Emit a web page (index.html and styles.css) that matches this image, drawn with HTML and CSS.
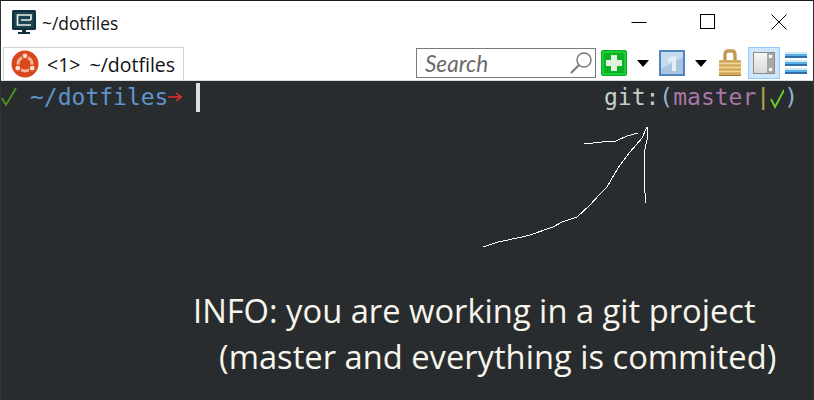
FILE: index.html
```html
<!DOCTYPE html>
<html lang="en">
<head>
<meta charset="utf-8">
<title>~/dotfiles</title>
<link rel="stylesheet" href="styles.css">
</head>
<body>
<div class="window">
  <header class="titlebar">
    <svg class="app-icon" width="24" height="24" viewBox="0 0 24 24">
      <rect x="0" y="0" width="24" height="20" rx="1.5" fill="#12303c"/>
      <rect x="2" y="2" width="20" height="16" fill="#1b4250"/>
      <path d="M19 10V5H5.500V15H19M9 10H19" fill="none" stroke="#e6efe9" stroke-width="1.700"/>
      <rect x="10" y="20" width="4" height="2" fill="#12303c"/>
      <rect x="6" y="22" width="12" height="2" fill="#12303c"/>
    </svg>
    <span class="title">~/dotfiles</span>
    <div class="caption">
      <svg class="caption-btn" width="16" height="16" viewBox="0 0 16 16"><path d="M0.5 8.500H15.500" stroke="#000" fill="none"/></svg>
      <svg class="caption-btn" width="16" height="16" viewBox="0 0 16 16"><rect x="0.500" y="0.500" width="14" height="14" stroke="#000" fill="none"/></svg>
      <svg class="caption-btn caption-close" width="16" height="16" viewBox="0 0 16 16"><path d="M0.500 0.500L15.500 15.500M15.500 0.500L0.500 15.500" stroke="#000" fill="none"/></svg>
    </div>
  </header>
  <nav class="toolbar">
    <div class="tab">
      <svg class="ubuntu" width="28" height="28" viewBox="0 0 28 28">
        <circle cx="14" cy="14" r="13.500" fill="#d9481c"/>
        <circle cx="14" cy="14" r="7" fill="none" stroke="#f3b79c" stroke-width="3"/>
        <circle cx="14" cy="5.800" r="3" fill="#f9dccd" stroke="#d9481c" stroke-width="1.200"/>
        <circle cx="6.800" cy="18.200" r="3" fill="#f9dccd" stroke="#d9481c" stroke-width="1.200"/>
        <circle cx="21.200" cy="18.200" r="3" fill="#f9dccd" stroke="#d9481c" stroke-width="1.200"/>
      </svg>
      <span class="tab-label">&lt;1&gt; ~/dotfiles</span>
    </div>
    <div class="tools">
      <div class="search">
        <span class="search-text">Search</span>
        <svg width="24" height="26" viewBox="0 0 24 26"><circle cx="15" cy="10" r="7" fill="#fff" stroke="#777" stroke-width="1.400"/><path d="M10 15L2 23" stroke="#777" stroke-width="2" fill="none"/></svg>
      </div>
      <svg class="tool-new" width="26" height="28" viewBox="0 0 26 28">
        <rect x="0.500" y="1.500" width="25" height="25" rx="1.500" fill="#18cf36" stroke="#0fa726"/>
        <rect x="3" y="4" width="20" height="20" fill="#0cb024"/>
        <path d="M10 6H16V11H21V17H16V22H10V17H5V11H10Z" fill="#dff2e2"/>
      </svg>
      <svg class="drop" width="12" height="7" viewBox="0 0 12 7"><path d="M0 0H12L6 7Z" fill="#000"/></svg>
      <svg class="tool-pane" width="26" height="28" viewBox="0 0 26 28">
        <rect x="1" y="2" width="24" height="24" fill="#c6d9ed" stroke="#4f86c0" stroke-width="2"/>
        <path d="M2 25V20L24 8V25Z" fill="#a9c4e1"/>
        <path d="M9 10L13 7H17V22H13V12L9 14Z" fill="#e4edf6"/>
      </svg>
      <svg class="drop" width="12" height="7" viewBox="0 0 12 7"><path d="M0 0H12L6 7Z" fill="#000"/></svg>
      <svg class="tool-lock" width="24" height="28" viewBox="0 0 24 28">
        <path d="M7 12V6Q7 2 10 2H14Q17 2 17 6V12" fill="none" stroke="#c09a50" stroke-width="3.400"/>
        <rect x="1" y="11" width="22" height="16" rx="1" fill="#d2aa5c"/>
        <path d="M1 14.500H23M1 18.500H23M1 22.500H23" stroke="#f0d898" stroke-width="1.400"/>
        <path d="M1 26.500H23" stroke="#a07c38"/>
      </svg>
      <div class="tool-active">
        <svg width="30" height="30" viewBox="0 0 30 30">
          <defs>
            <linearGradient id="paneFill" x1="0" y1="0" x2="0" y2="1">
              <stop offset="0" stop-color="#f8f8f8"/>
              <stop offset="1" stop-color="#d8d8d8"/>
            </linearGradient>
          </defs>
          <rect x="4.500" y="4.500" width="21" height="21" fill="url(#paneFill)" stroke="#8a8a8a"/>
          <rect x="18" y="5" width="7" height="20" fill="#a8a8a8"/>
          <rect x="20" y="7" width="3" height="3" fill="#fff"/>
          <rect x="20" y="20" width="3" height="3" fill="#fff"/>
        </svg>
      </div>
      <svg class="tool-menu" width="22" height="22" viewBox="0 0 22 22">
        <rect width="22" height="2" fill="#d5e8f7"/><rect y="2" width="22" height="2" fill="#58b0ea"/><rect y="4" width="22" height="2" fill="#2f70aa"/>
        <rect y="8" width="22" height="2" fill="#d5e8f7"/><rect y="10" width="22" height="2" fill="#58b0ea"/><rect y="12" width="22" height="2" fill="#2f70aa"/>
        <rect y="16" width="22" height="2" fill="#d5e8f7"/><rect y="18" width="22" height="2" fill="#58b0ea"/><rect y="20" width="22" height="2" fill="#2f70aa"/>
      </svg>
    </div>
  </nav>
  <main class="terminal">
    <div class="prompt-row">
      <div class="prompt">
        <svg class="prompt-check" width="29" height="32" viewBox="0 0 29 32"><path d="M1 17L5 24L15 7" fill="none" stroke="#4e9a1e" stroke-width="1.600"/></svg>
        <span class="path">~/dotfiles</span>
        <svg class="prompt-arrow" width="14" height="32" viewBox="0 0 14 32"><path d="M0 16H13M8 12L13 16L8 20" fill="none" stroke="#e62d2d" stroke-width="1.600"/></svg>
        <span class="cursor"></span>
      </div>
      <div class="git">
        <span class="git-word">git:</span><span class="paren">(</span><span class="branch">master</span><span class="bar">|</span><svg class="git-check" width="14" height="32" viewBox="0 0 14 32"><path d="M1 18L5 26L14 9" fill="none" stroke="#6fcf2a" stroke-width="1.800"/></svg><span class="paren">)</span>
      </div>
    </div>
    <svg class="sketch" width="814" height="319" viewBox="0 81 814 319">
      <path d="M483 247L498 242L522 237L530 235L553 227L562 222L577 217L590 205L600 194L607 187L618 168L630 152L642 138L647 127" fill="none" stroke="#fff" stroke-width="1" shape-rendering="crispEdges"/>
      <path d="M584 144L602 142L616 141L627 136L638 133" fill="none" stroke="#fff" stroke-width="1" shape-rendering="crispEdges"/>
      <path d="M647 127L647 140L644 153L644 183L646 203" fill="none" stroke="#fff" stroke-width="1" shape-rendering="crispEdges"/>
    </svg>
    <p class="info">
      <span class="info-one">INFO: you are working in a git project</span>
      <span class="info-two">(master and everything is commited)</span>
    </p>
  </main>
</div>
</body>
</html>
```
FILE: styles.css
```css
* { box-sizing: border-box; }
html, body { margin: 0; height: 100%; overflow: hidden; }
body { font-family: "Open Sans", "Noto Sans", sans-serif; }

.window {
  width: 814px;
  height: 400px;
  display: flex;
  flex-direction: column;
  background: #fff;
  border-top: 1px solid #1c1c1c;
  border-left: 1px solid #333;
  border-right: 1px solid #333;
}

.titlebar {
  height: 43px;
  display: flex;
  align-items: center;
  padding-left: 11px;
  flex: none;
}
.app-icon { flex: none; margin-top: -1px; }
.title { margin-left: 6px; font-size: 17.400px; color: #111; }
.caption {
  margin-left: auto;
  display: flex;
  gap: 53px;
  padding-right: 26px;
  margin-top: -1px;
}
.caption-btn { display: block; }
.caption-close { margin-left: 2px; }

.toolbar {
  height: 37px;
  flex: none;
  display: flex;
  align-items: flex-end;
  padding-left: 2px;
  border-bottom: 1px solid #dcdcdc;
}
.tab {
  width: 181px;
  height: 33px;
  border: 1px solid #d2d2d2;
  border-bottom: none;
  display: flex;
  align-items: center;
  padding-left: 7px;
  gap: 8px;
}
.tab-label { font-size: 19.500px; word-spacing: 4px; color: #111; white-space: nowrap; }
.tools {
  margin-left: auto;
  align-self: flex-start;
  display: flex;
  align-items: center;
  height: 36px;
  padding: 2px 6px 0 0;
}
.search {
  width: 180px;
  height: 30px;
  margin-right: 5px;
  border: 1px solid #7a7a7a;
  display: flex;
  align-items: center;
  justify-content: space-between;
  padding: 0 2px 0 8px;
}
.search-text { font-family: "Lato", sans-serif; font-style: italic; font-size: 22.500px; color: #6b6b6b; }
.drop { margin: 0 10px; flex: none; }
.tool-lock { margin: 0 6px 0 1px; }
.tool-active {
  width: 32px;
  height: 32px;
  background: #cde6fb;
  border: 1px solid #96c9f5;
  display: flex;
  align-items: center;
  justify-content: center;
  margin-right: 5px;
}
.tool-menu { flex: none; }

.terminal {
  flex: 1;
  min-height: 0;
  position: relative;
  background: #282c2e;
  color: #abb2bf;
}
.prompt-row {
  display: flex;
  justify-content: space-between;
  align-items: flex-start;
  font-family: "DejaVu Sans Mono", monospace;
  font-size: 23px;
  line-height: 32px;
  white-space: pre;
  padding-right: 15px;
}
.prompt { display: flex; align-items: flex-start; }
.git { display: flex; align-items: flex-start; }
.path { color: #5f93c9; }
.prompt-arrow { flex: none; }
.cursor { width: 4px; height: 29px; margin: 2px 0 0 14px; background: #dedede; }
.git-word { color: #c3d1c8; }
.paren { color: #8fb2d8; }
.branch { color: #a877a8; }
.bar { color: #b8a44a; }

.sketch { position: absolute; left: -1px; top: 0; }

.info {
  margin: 175px 0 0;
  color: #f7f5ec;
  font-size: 32.700px;
  line-height: 46px;
  white-space: nowrap;
}
.info span { display: block; }
.info-one { padding-left: 192px; }
.info-two { padding-left: 218px; }
```
